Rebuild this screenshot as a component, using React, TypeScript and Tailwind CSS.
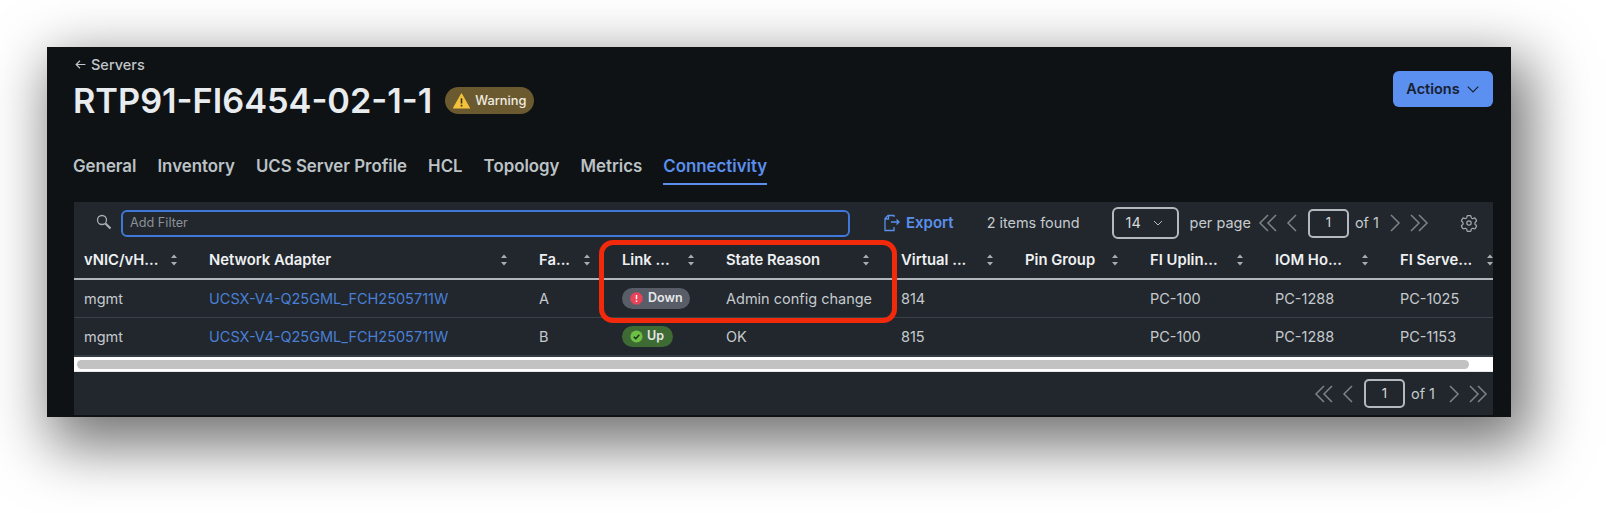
import React from "react";

const cols = "grid grid-cols-[125px_330px_83px_104px_175px_124px_125px_125px_125px_125px] w-[1441px]";

function Sort() {
  return (
    <svg width="8" height="14" viewBox="0 0 8 14" className="shrink-0" fill="#a9aeb3">
      <path d="M4 1.500 7 5H1Z" />
      <path d="M4 12.500 1 9h6Z" />
    </svg>
  );
}

function H({ t }: { t: string }) {
  return (
    <div className="flex items-center justify-between pl-[10px] pr-[21px] h-full">
      <span className="text-[14.800px] font-semibold text-[#eef0f2] whitespace-nowrap">{t}</span>
      <Sort />
    </div>
  );
}

function C({ children, link }: { children?: React.ReactNode; link?: boolean }) {
  return (
    <div className={`flex items-center pl-[10px] h-full text-[14.500px] whitespace-nowrap ${link ? "text-[#4a7fd6]" : "text-[#c6cacd]"}`}>
      {children}
    </div>
  );
}

function Chev({ d }: { d: string }) {
  return (
    <svg width="24" height="24" viewBox="0 0 24 24" fill="none" stroke="#7d8389" strokeWidth="1.500">
      <path d={d} />
    </svg>
  );
}

function Pager({ tight }: { tight?: boolean }) {
  return (
    <div className="flex items-center">
      <Chev d="M12 4 4 12l8 8M20 4l-8 8 8 8" />
      <div className="ml-[1px]"><Chev d="M15 4 7 12l8 8" /></div>
      <div className="ml-[3px] w-[41px] h-[29px] border-2 border-[#b4b9be] rounded-[5px] flex items-center justify-center text-[13px] text-[#d7dadc]">1</div>
      <span className="ml-[6px] text-[14.500px] text-[#c6cacd]">of 1</span>
      <div className={tight ? "ml-[3px]" : "ml-[6px]"}><Chev d="M9 4l8 8-8 8" /></div>
      <div className="ml-[1px]"><Chev d="M4 4l8 8-8 8M12 4l8 8-8 8" /></div>
    </div>
  );
}

export default function App() {
  return (
    <div className="w-[1606px] h-[513px] bg-white overflow-hidden pl-[47px] pt-[47px] font-['Inter',sans-serif]">
      <div className="relative w-[1464px] h-[370px] bg-[#0e1215] pl-[27px] pr-[18px] flex flex-col shadow-[11px_21px_55px_8px_rgba(0,0,0,0.55)]">
        {/* Heading */}
        <div className="flex justify-between h-[155px] shrink-0">
          <div>
            <div className="flex items-center gap-[4px] mt-[9px] h-[17px] text-[#c0c5c9] text-[14.500px] font-medium">
              <svg width="13" height="13" viewBox="0 0 24 24" fill="none" stroke="#c0c5c9" strokeWidth="2.200">
                <path d="M21 12H4M11 5l-7 7 7 7" />
              </svg>
              Servers
            </div>
            <div className="flex items-center mt-[9px] h-[38px] -ml-[1px]">
              <span className="text-[34.300px] font-semibold text-[#e9ecef] leading-none">RTP91-FI6454-02-1-1</span>
              <span className="ml-[13px] h-[27px] w-[89px] rounded-full bg-[#6b5a2f] flex items-center pl-[8px] gap-[5px] text-[12.800px] font-medium text-[#f1ede1] -mt-[1px]">
                <svg width="17" height="16" viewBox="0 0 17 16">
                  <path d="M8.500 1 16.400 15H.6Z" fill="#f4c23c" stroke="#f4c23c" strokeLinejoin="round" strokeWidth="1.200" />
                  <path d="M8.500 5.200v5.200M8.500 11.800v1.600" stroke="#3b3215" strokeWidth="1.600" />
                </svg>
                Warning
              </span>
            </div>
            <div className="flex gap-[21px] mt-[34px] -ml-[1px] text-[16.850px] font-semibold text-[#bcc2c6]">
              <span className="h-[26px] leading-[24px]">General</span>
              <span className="h-[26px] leading-[24px]">Inventory</span>
              <span className="h-[26px] leading-[24px]">UCS Server Profile</span>
              <span className="h-[26px] leading-[24px]">HCL</span>
              <span className="h-[26px] leading-[24px]">Topology</span>
              <span className="h-[26px] leading-[24px]">Metrics</span>
              <span className="h-[31px] leading-[24px] text-[#5b8fec] border-b-2 border-[#5b8fec]">Connectivity</span>
            </div>
          </div>
          <button className="mt-[24px] h-[36px] w-[100px] rounded-[6px] bg-[#5b8ff0] flex items-center justify-center gap-[6px] text-[14.500px] font-semibold text-[#17202e]">
            Actions
            <svg width="14" height="14" viewBox="0 0 24 24" fill="none" stroke="#17202e" strokeWidth="2">
              <path d="M3 8l9 9 9-9" />
            </svg>
          </button>
        </div>

        {/* Panel */}
        <div className="w-[1419px] h-[213px] bg-[#21272d] flex flex-col overflow-hidden">
          {/* Toolbar */}
          <div className="h-[40px] shrink-0 flex items-center pl-[21px] pt-[2px]">
            <svg width="18" height="18" viewBox="0 0 18 18" fill="none" stroke="#a9aeb3" strokeWidth="1.300" className="-mt-[3px]">
              <circle cx="7" cy="7" r="4.500" />
              <path d="M10.500 10.500 15.500 15.500" strokeWidth="2.200" />
            </svg>
            <div className="ml-[8px] w-[729px] h-[27px] rounded-[6px] border-2 border-[#3f78d8] flex items-center pl-[7px] text-[12.700px] text-[#8b9197]">Add Filter</div>
            <svg width="16" height="18" viewBox="0 0 16 18" fill="none" stroke="#5b8fec" strokeWidth="1.300" className="ml-[34px]">
              <path d="M10 3V1.500H4L1 4.500v12h9V13M1 5h3.500V1.500" />
              <path d="M7 8h8M12.500 5.500 15 8l-2.500 2.500" />
            </svg>
            <span className="ml-[6px] text-[15px] font-semibold text-[#5b8fec]">Export</span>
            <span className="ml-[33px] text-[14.400px] text-[#c6cacd]">2 items found</span>
            <div className="ml-[32px] w-[67px] h-[32px] rounded-[6px] border-2 border-[#b4b9be] flex items-center pl-[12px] gap-[11px] text-[14.500px] text-[#d7dadc]">
              14
              <svg width="12" height="12" viewBox="0 0 24 24" fill="none" stroke="#b4b9be" strokeWidth="2">
                <path d="M4 8l8 8 8-8" />
              </svg>
            </div>
            <span className="ml-[11px] text-[14.500px] text-[#c6cacd]">per page</span>
            <div className="ml-[5px]"><Pager tight /></div>
            <svg width="20" height="20" viewBox="0 0 24 24" fill="none" stroke="#a4a9ae" strokeWidth="1.500" className="ml-[28px]">
              <path d="M9.600 3.900c.1-.6.6-.9 1.100-.9h2.600c.6 0 1 .4 1.100.9l.2 1.400c.1.400.4.700.7.900l.5.300c.3.200.7.200 1.100.100l1.300-.5c.5-.2 1.100 0 1.400.5l1.300 2.200c.3.500.2 1.100-.3 1.500l-1.100.9c-.3.300-.5.600-.4 1v.600c0 .4.100.7.400 1l1.100.9c.4.400.6 1 .3 1.500l-1.300 2.200c-.3.500-.9.700-1.400.5l-1.300-.5c-.4-.1-.8-.1-1.100.1l-.5.300c-.3.200-.6.500-.7.900l-.2 1.400c-.1.500-.6.900-1.100.9h-2.600c-.6 0-1-.4-1.100-.9l-.2-1.400c-.1-.4-.4-.7-.7-.9l-.5-.3c-.3-.2-.7-.2-1.100-.1l-1.300.5c-.5.2-1.100 0-1.400-.5l-1.300-2.200c-.3-.5-.2-1.100.3-1.500l1.100-.9c.3-.3.5-.6.400-1v-.6c0-.4-.1-.7-.4-1l-1.100-.9c-.4-.4-.6-1-.3-1.500l1.300-2.200c.3-.5.9-.7 1.400-.5l1.300.5c.4.100.8.100 1.100-.1l.5-.3c.3-.2.600-.5.700-.9Z" />
              <circle cx="12" cy="12" r="2.600" />
            </svg>
          </div>

          {/* Table */}
          <div className="overflow-hidden shrink-0">
            <div className={`${cols} h-[36px]`}>
              <H t="vNIC/vH..." />
              <H t="Network Adapter" />
              <H t="Fa..." />
              <H t="Link ..." />
              <H t="State Reason" />
              <H t="Virtual ..." />
              <H t="Pin Group" />
              <H t="FI Uplin..." />
              <H t="IOM Ho..." />
              <H t="FI Serve..." />
            </div>
            <div className="h-[2px] bg-[#b1b6ba]" />
            <div className={`${cols} h-[38px] border-b border-[#3a4148]`}>
              <C>mgmt</C>
              <C link>UCSX-V4-Q25GML_FCH2505711W</C>
              <C>A</C>
              <C>
                <span className="w-[68px] h-[21px] rounded-full bg-[#585d68] flex items-center pl-[8px] gap-[5px] text-[12.500px] font-semibold text-[#e6e8ea]">
                  <svg width="13" height="13" viewBox="0 0 14 14">
                    <path d="M4.300 .5h5.400L13.500 4.300v5.400L9.700 13.500H4.300L.5 9.700V4.300Z" fill="#ea4259" />
                    <path d="M7 3.200v4.600M7 9.200v1.600" stroke="#fff" strokeWidth="1.600" />
                  </svg>
                  Down
                </span>
              </C>
              <C>Admin config change</C>
              <C>814</C>
              <C />
              <C>PC-100</C>
              <C>PC-1288</C>
              <C>PC-1025</C>
            </div>
            <div className={`${cols} h-[39px] border-b-2 border-[#353c43]`}>
              <C>mgmt</C>
              <C link>UCSX-V4-Q25GML_FCH2505711W</C>
              <C>B</C>
              <C>
                <span className="w-[51px] h-[21px] rounded-full bg-[#3e6a34] flex items-center pl-[8px] gap-[4px] text-[12.500px] font-semibold text-[#e6e8ea]">
                  <svg width="13" height="13" viewBox="0 0 14 14">
                    <circle cx="7" cy="7" r="6.500" fill="#6dbf45" />
                    <path d="M4 7.200 6.200 9.300 10 5" fill="none" stroke="#1d3318" strokeWidth="1.600" />
                  </svg>
                  Up
                </span>
              </C>
              <C>OK</C>
              <C>815</C>
              <C />
              <C>PC-100</C>
              <C>PC-1288</C>
              <C>PC-1153</C>
            </div>
          </div>

          {/* Scrollbar */}
          <div className="h-[15px] shrink-0 bg-white pl-[3px] flex items-center border-b border-[#e8e8e8]">
            <div className="w-[1392px] h-[9px] rounded-full bg-[#c2c2c2]" />
          </div>

          {/* Footer */}
          <div className="flex-1 flex items-center justify-end pr-[3px]">
            <Pager />
          </div>
        </div>

        {/* Callout */}
        <div className="absolute left-[552px] top-[193px] w-[298px] h-[83px] rounded-[14px] border-[5px] border-[#f22a0b]" />
      </div>
    </div>
  );
}
